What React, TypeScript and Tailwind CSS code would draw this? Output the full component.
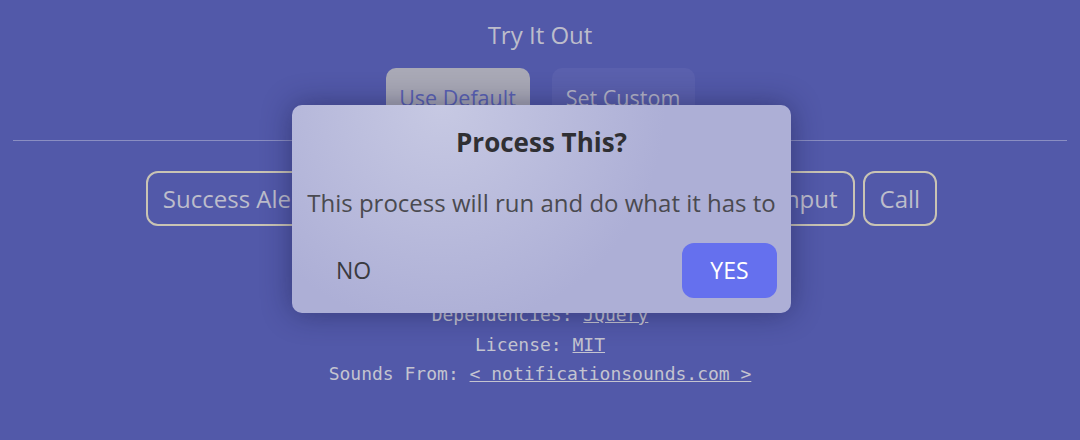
import React from "react";

const sans = "font-['Open_Sans','Noto_Sans',sans-serif]";
const mono = "font-['DejaVu_Sans_Mono','Liberation_Mono',monospace]";

const actions = ["Success Alert", "Error Alert", "Warning", "Confirm", "Input", "Call"];

const App = () => {
  return (
    <div className={`relative min-h-[440px] w-full bg-[#5259a9] ${sans} text-[#bdbdcb]`}>
      <div className="flex flex-col items-center pt-[19px]">
        <h2 className="text-[24px] leading-[32px]">Try It Out</h2>
        <div className="mt-[17px] flex gap-[22px]">
          <button className="h-[60px] w-[144px] rounded-[10px] bg-[#a9a9b6] text-[21.5px] text-[#5a62b4]">
            Use Default
          </button>
          <button className="h-[60px] w-[143px] rounded-[10px] bg-[#5a60ad] text-[21.5px] text-[#b6b6c8]">
            Set Custom
          </button>
        </div>
      </div>
      <hr className="mx-[13px] mt-[12px] border-t border-[#8a8ec2]" />
      <div className="mt-[30px] flex justify-center gap-[8px] pl-[3px]">
        {actions.map((label) => (
          <button
            key={label}
            className="h-[55px] rounded-[12px] border-2 border-[#c9c4b4] px-[15px] text-[24px] text-[#bdbdcb]"
          >
            {label}
          </button>
        ))}
      </div>
      <div className={`mt-[74px] flex flex-col items-center ${mono} text-[18px] leading-[29.5px] text-[#c4c4d0]`}>
        <p>
          Dependencies: <a className="underline">JQuery</a>
        </p>
        <p>
          License: <a className="underline">MIT</a>
        </p>
        <p>
          Sounds From: <a className="underline">&lt; notificationsounds.com &gt;</a>
        </p>
      </div>

      <div className="absolute left-[292px] top-[105px] flex h-[208px] w-[499px] flex-col rounded-[10px] bg-[radial-gradient(circle_at_30%_0%,#c7c9e3,#adafd6_55%)] px-[14px] pb-[15px] shadow-[0_0_30px_rgba(20,20,60,0.45)]">
        <h3 className="mt-[21px] text-center text-[26px] font-bold leading-[32px] text-[#2f2f33]">
          Process This?
        </h3>
        <p className="mt-[28px] whitespace-nowrap text-center text-[24px] leading-[34px] text-[#4a4a50]">
          This process will run and do what it has to
        </p>
        <div className="mt-auto flex items-center justify-between">
          <button className="h-[55px] w-[95px] rounded-[12px] text-[23px] text-[#3a3a40]">NO</button>
          <button className="h-[55px] w-[95px] rounded-[12px] bg-[#6570ee] text-[23px] text-white">
            YES
          </button>
        </div>
      </div>
    </div>
  );
};

export default App;
